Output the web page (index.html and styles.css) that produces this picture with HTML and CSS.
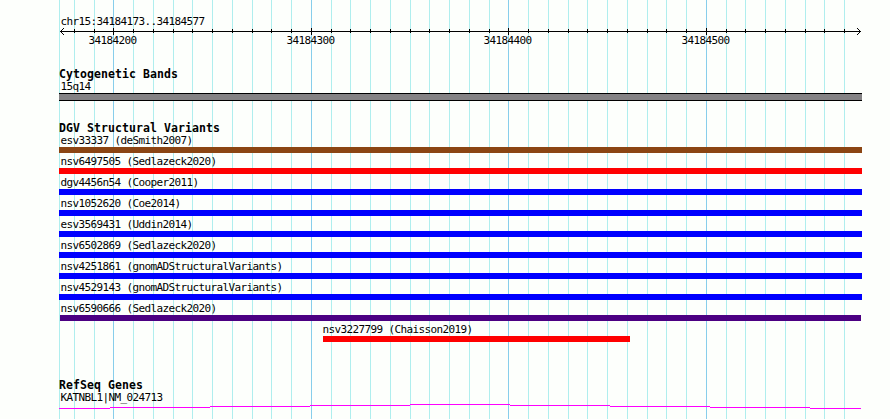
FILE: index.html
```
<!DOCTYPE html>
<html lang="en">
<head>
    <meta charset="UTF-8">
    <title>chr15:34184173..34184577</title>
    <link rel="stylesheet" href="styles.css">
</head>
<body>
    <div class="browser">
        <!-- grid lines behind the tracks -->
        <svg class="grid" width="803" height="419" shape-rendering="crispEdges">
            <path class="minor" d="M.5 0V419M15.5 0V419M35.5 0V419M74.5 0V419M94.5 0V419M114.5 0V419M133.5 0V419M153.5 0V419M173.5 0V419M193.5 0V419M212.5 0V419M232.5 0V419M272.5 0V419M291.5 0V419M311.5 0V419M331.5 0V419M351.5 0V419M370.5 0V419M390.5 0V419M410.5 0V419M430.5 0V419M469.5 0V419M489.5 0V419M509.5 0V419M528.5 0V419M548.5 0V419M568.5 0V419M588.5 0V419M607.5 0V419M627.5 0V419M667.5 0V419M686.5 0V419M706.5 0V419M726.5 0V419M746.5 0V419M765.5 0V419M785.5 0V419"/>
            <path class="major" d="M54.5 0V419M252.5 0V419M449.5 0V419M647.5 0V419"/>
        </svg>

        <div class="ruler">
            <div class="label">chr15:34184173..34184577</div>
            <svg width="803" height="20" shape-rendering="crispEdges">
                <path class="axis" d="M1 3.5H802"/>
                <path class="axis" d="M15.5 1v4M35.5 1v4M74.5 1v4M94.5 1v4M114.5 1v4M133.5 1v4M153.5 1v4M173.5 1v4M193.5 1v4M212.5 1v4M232.5 1v4M272.5 1v4M291.5 1v4M311.5 1v4M331.5 1v4M351.5 1v4M370.5 1v4M390.5 1v4M410.5 1v4M430.5 1v4M469.5 1v4M489.5 1v4M509.5 1v4M528.5 1v4M548.5 1v4M568.5 1v4M588.5 1v4M607.5 1v4M627.5 1v4M667.5 1v4M686.5 1v4M706.5 1v4M726.5 1v4M746.5 1v4M765.5 1v4M785.5 1v4"/>
                <path class="axis" d="M54.5 0v7M252.5 0v7M449.5 0v7M647.5 0v7"/>
                <path d="M1 3h1v1h-1zM2 2h1v1h-1zM2 4h1v1h-1zM3 1h1v1h-1zM3 5h1v1h-1zM4 0h1v1h-1zM4 6h1v1h-1zM801 3h1v1h-1zM800 2h1v1h-1zM800 4h1v1h-1zM799 1h1v1h-1zM799 5h1v1h-1zM798 0h1v1h-1zM798 6h1v1h-1z"/>
                <text x="29.5" y="16">34184200</text>
                <text x="227.5" y="16">34184300</text>
                <text x="424.5" y="16">34184400</text>
                <text x="622.5" y="16">34184500</text>
            </svg>
        </div>

        <div class="track cytoband">
            <h2>Cytogenetic Bands</h2>
            <div class="label">15q14</div>
            <div class="band"></div>
        </div>

        <div class="track variants">
            <h2>DGV Structural Variants</h2>
            <div class="label">esv33337 (deSmith2007)</div>
            <div class="bar brown"></div>
            <div class="label">nsv6497505 (Sedlazeck2020)</div>
            <div class="bar red"></div>
            <div class="label">dgv4456n54 (Cooper2011)</div>
            <div class="bar blue"></div>
            <div class="label">nsv1052620 (Coe2014)</div>
            <div class="bar blue"></div>
            <div class="label">esv3569431 (Uddin2014)</div>
            <div class="bar blue"></div>
            <div class="label">nsv6502869 (Sedlazeck2020)</div>
            <div class="bar blue"></div>
            <div class="label">nsv4251861 (gnomADStructuralVariants)</div>
            <div class="bar blue"></div>
            <div class="label">nsv4529143 (gnomADStructuralVariants)</div>
            <div class="bar blue"></div>
            <div class="label">nsv6590666 (Sedlazeck2020)</div>
            <div class="bar purple"></div>
            <div class="partial">
                <div class="label">nsv3227799 (Chaisson2019)</div>
                <div class="bar red"></div>
            </div>
        </div>

        <div class="track genes">
            <h2>RefSeq Genes</h2>
            <div class="label">KATNBL1|NM_024713</div>
            <svg width="803" height="6" shape-rendering="crispEdges">
                <path class="gene" d="M0 4.5H51M51 3.5H151M151 2.5H251M251 1.5H351M351 .5H451M451 1.5H551M551 2.5H651M651 3.5H751M751 4.5H802"/>
            </svg>
        </div>
    </div>
</body>
</html>
```
FILE: styles.css
```
body {
    margin: 0;
    background: #fdfffc;
    color: #000;
    font-family: "DejaVu Sans Mono", monospace;
    font-size: 11px;
    line-height: 17px;
    overflow: hidden;
}
.browser {
    position: relative;
    width: 803px;
    height: 419px;
    margin-left: 59px;
}
svg {
    display: block;
}
path {
    stroke-width: 1;
}
.grid {
    position: absolute;
    top: 0;
    left: 0;
    z-index: -1;
}
.minor {
    stroke: #afeeee;
}
.major {
    stroke: #87ceeb;
}
.axis {
    stroke: #000;
}
.gene {
    stroke: #ff00ff;
}
.label, text {
    letter-spacing: -0.622px;
    white-space: nowrap;
}
.label {
    height: 15px;
    padding-left: 1.5px;
    box-sizing: border-box;
}
.ruler {
    padding-top: 13px;
    height: 53px;
}
h2 {
    margin: 0;
    height: 12px;
    font-size: 11.5px;
    font-weight: bold;
    line-height: 17px;
    letter-spacing: 0.077px;
}
.band {
    height: 6px;
    background: #848284;
    border-top: 1px solid #000;
    border-bottom: 1px solid #000;
}
.cytoband {
    margin-bottom: 19px;
}
.variants {
    margin-bottom: 35px;
}
.bar {
    height: 6px;
}
.brown {
    background: #8b4513;
}
.red {
    background: #ff0000;
}
.blue {
    background: #0000ff;
}
.purple {
    background: #4b0082;
    margin: 0 1px;
}
.partial {
    width: 307px;
    margin-left: 264px;
}
.partial .label {
    padding-left: 0;
    margin-left: -0.5px;
}
```
